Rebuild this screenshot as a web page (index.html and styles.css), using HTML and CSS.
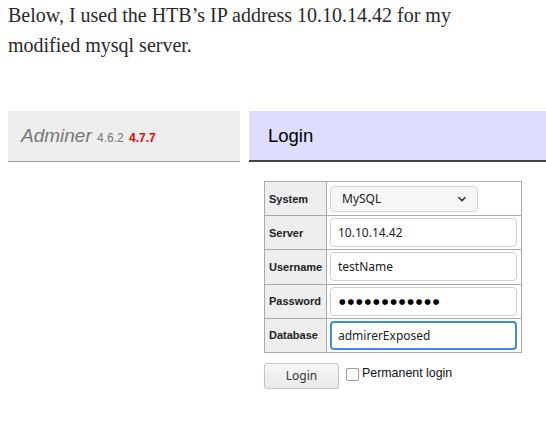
FILE: index.html
```html
<!DOCTYPE html>
<html lang="en">
<head>
<meta charset="utf-8">
<title>Adminer login</title>
<link rel="stylesheet" href="styles.css">
</head>
<body>
<p class="intro">Below, I used the HTB’s IP address 10.10.14.42 for my modified mysql server.</p>
<div class="adminer">
  <div class="menu">
    <h1 class="brand"><span class="brand-line"><span class="brand-name">Adminer</span> <span class="version">4.6.2</span> <span class="new-version">4.7.7</span></span></h1>
  </div>
  <div class="content">
    <h2 class="title">Login</h2>
    <table class="login-table">
      <colgroup><col class="col-label"><col class="col-field"></colgroup>
      <tr><th>System</th><td><div class="select"><span>MySQL</span><svg width="10" height="6" viewBox="0 0 10 6"><path d="M1.5 1.2 L5 4.6 L8.5 1.2" fill="none" stroke="#333" stroke-width="1.6"/></svg></div></td></tr>
      <tr><th>Server</th><td><input class="field" type="text" value="10.10.14.42"></td></tr>
      <tr><th>Username</th><td><input class="field" type="text" value="testName"></td></tr>
      <tr><th>Password</th><td><input class="field dots" type="text" value="●●●●●●●●●●●●"></td></tr>
      <tr><th>Database</th><td><input class="field focused" type="text" value="admirerExposed"></td></tr>
    </table>
    <div class="actions">
      <button class="btn" type="button">Login</button>
      <label class="perm"><span class="check"></span>Permanent login</label>
    </div>
  </div>
</div>
</body>
</html>
```

FILE: styles.css
```css
html, body {
  margin: 0;
  padding: 0;
  background: #fff;
}
body {
  padding-left: 8px;
  overflow: hidden;
}
.intro {
  margin: 0;
  width: 480px;
  font-family: "Liberation Serif", serif;
  font-size: 20px;
  line-height: 30px;
  color: #292929;
}
.adminer {
  display: flex;
  gap: 9px;
  margin-top: 51px;
  font-family: "Liberation Sans", Arial, sans-serif;
}
.menu {
  width: 232px;
  flex: none;
}
.brand {
  margin: 0;
  height: 50px;
  display: flex;
  align-items: center;
  padding: 0 13px;
  background: #eee;
  border-bottom: 1px solid #999;
  font-weight: normal;
  font-size: 19px;
  color: #777;
}
.brand-line {
  white-space: nowrap;
}
.brand-name {
  font-style: italic;
}
.version {
  font-size: 12px;
  color: #777;
}
.new-version {
  font-size: 12px;
  color: #e00;
  font-weight: bold;
}
.content {
  flex: 1;
}
.title {
  margin: 0;
  height: 49px;
  display: flex;
  align-items: center;
  padding: 0 19px;
  background: #ddf;
  border-bottom: 2px solid #444;
  font-weight: normal;
  font-size: 18.5px;
  color: #000;
}
.login-table {
  margin: 19px 0 0 15px;
  border-collapse: collapse;
  table-layout: fixed;
  width: 257px;
  border: 1px solid #aaa;
}
.col-label { width: 62px; }
.col-field { width: 195px; }
.login-table tr { height: 34.2px; }
.login-table th {
  background: #eee;
  border: 1px solid #aaa;
  text-align: left;
  padding: 0 0 0 4px;
  font-size: 11px;
  font-weight: bold;
  color: #222;
  white-space: nowrap;
}
.login-table td {
  border: 1px solid #aaa;
  padding: 0 3px;
}
.select {
  width: 148px;
  height: 26px;
  box-sizing: border-box;
  border: 1px solid #d3d3d3;
  border-radius: 4px;
  background: #f6f6f6;
  display: flex;
  align-items: center;
  justify-content: space-between;
  padding: 0 10px 0 11px;
  font-family: "Noto Sans", sans-serif;
  font-size: 12px;
  color: #222;
}
.field {
  display: block;
  width: 187px;
  height: 29px;
  box-sizing: border-box;
  margin: 0;
  border: 1px solid #d0d0d0;
  border-radius: 4px;
  padding: 0 7px;
  font-family: "Noto Sans", sans-serif;
  font-size: 12px;
  color: #222;
  background: #fff;
  outline: none;
}
.dots {
  font-family: "DejaVu Sans", sans-serif;
  font-size: 7.6px;
  color: #000;
  letter-spacing: 1.9px;
  padding-left: 8px;
}
.focused {
  border: 2px solid #3d8ee0;
  padding: 0 6px;
}
.actions {
  display: flex;
  align-items: center;
  margin: 10px 0 0 15px;
}
.btn {
  width: 75px;
  height: 26px;
  box-sizing: border-box;
  border: 1px solid #c4c4c4;
  border-radius: 3px;
  background: linear-gradient(#f7f7f7, #e9e9e9);
  box-shadow: 0 1px 1px rgba(0,0,0,0.15);
  font-family: "Noto Sans", sans-serif;
  font-size: 12px;
  color: #333;
  padding: 0;
}
.perm {
  display: flex;
  align-items: center;
  margin-left: 7px;
  margin-top: -5px;
  font-size: 12.4px;
  color: #111;
}
.check {
  width: 13px;
  height: 13px;
  box-sizing: border-box;
  border: 1px solid #9a9a9a;
  border-radius: 2px;
  background: #fff;
  margin-right: 3px;
  margin-top: 3px;
}
```
